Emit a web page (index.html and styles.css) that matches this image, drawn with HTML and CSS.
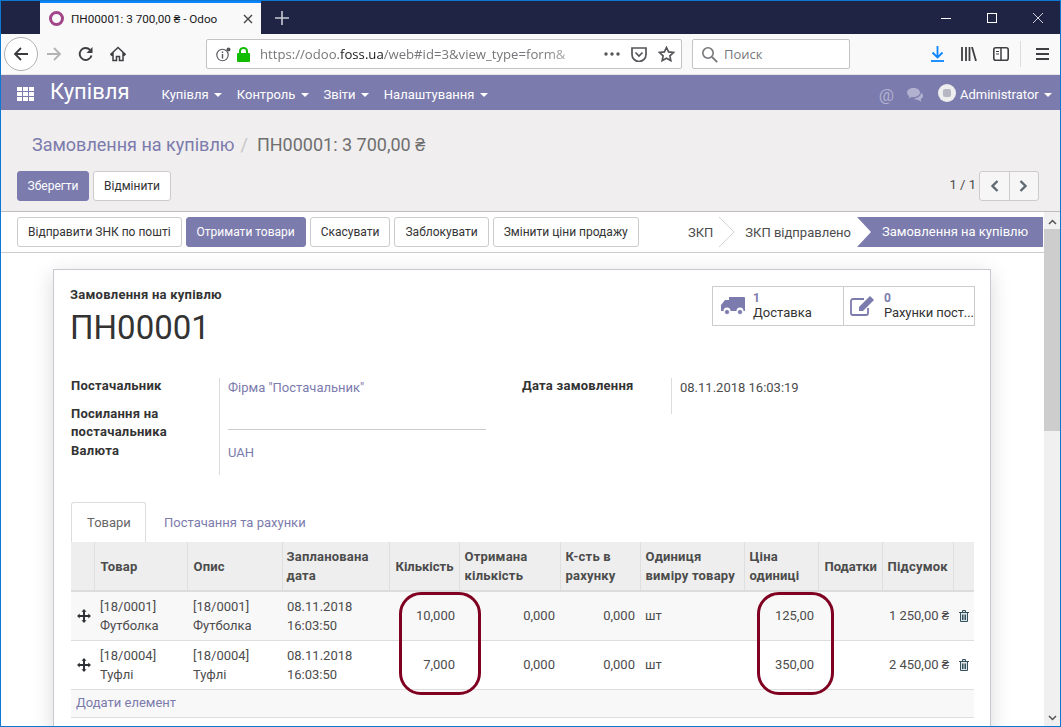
FILE: index.html
```html
<!DOCTYPE html>
<html lang="uk">
<head>
    <meta charset="UTF-8">
    <title>ПН00001: 3 700,00 ₴ - Odoo</title>
    <link rel="stylesheet" href="styles.css">
</head>
<body>
<div class="window">
    <!-- browser tabs -->
    <div class="tabbar">
        <div class="tab">
            <span class="favicon"></span>
            <span class="tab-title">ПН00001: 3 700,00 ₴ - Odoo</span>
            <svg class="tab-close" width="10" height="10" viewBox="0 0 10 10"><path d="M1 1l8 8M9 1l-8 8" stroke="#444" stroke-width="1.4"/></svg>
        </div>
        <svg class="tab-new" width="14" height="14" viewBox="0 0 14 14"><path d="M7 0v14M0 7h14" stroke="#c9cad3" stroke-width="1.6"/></svg>
        <div class="win-controls">
            <svg width="10" height="10" viewBox="0 0 10 10"><path d="M0 5.500h10" stroke="#fff"/></svg>
            <svg width="10" height="10" viewBox="0 0 10 10"><rect x=".5" y=".5" width="9" height="9" fill="none" stroke="#fff"/></svg>
            <svg width="10" height="10" viewBox="0 0 10 10"><path d="M0 0l10 10M10 0L0 10" stroke="#fff" stroke-width=".8"/></svg>
        </div>
    </div>

    <!-- browser toolbar -->
    <div class="toolbar">
        <span class="back-btn">
            <svg width="16" height="16" viewBox="0 0 16 16"><path d="M15 8H2M8 2L2 8l6 6" fill="none" stroke="#3b3b3f" stroke-width="1.8"/></svg>
        </span>
        <svg class="tool-icon fwd" width="16" height="16" viewBox="0 0 16 16"><path d="M1 8h13M8 2l6 6-6 6" fill="none" stroke="#b3b3b5" stroke-width="1.8"/></svg>
        <svg class="tool-icon" width="16" height="16" viewBox="0 0 16 16"><path d="M13.500 9.500A6 6 0 1 1 12 3.800" fill="none" stroke="#3f3f43" stroke-width="1.9"/><path d="M14.500 1v6h-6z" fill="#3f3f43"/></svg>
        <svg class="tool-icon" width="16" height="16" viewBox="0 0 16 16"><path d="M8 1.500L.8 8.200l1 1L3 8.200V14.500h3.500v-4h3v4H13V8.200l1.200 1 1-1z" fill="none" stroke="#3f3f43" stroke-width="1.5"/></svg>
        <div class="urlbar">
            <svg width="15" height="15" viewBox="0 0 15 15"><circle cx="6.500" cy="8" r="5.700" fill="none" stroke="#55555a" stroke-width="1.1"/><path d="M6.500 7v4.500M6.500 4.500v1.400" stroke="#55555a" stroke-width="1.4"/><circle cx="12.500" cy="2.500" r="2" fill="#55555a"/></svg>
            <svg class="lock" width="13" height="15" viewBox="0 0 13 15"><rect x="0" y="6" width="13" height="9" rx="1" fill="#12bc00"/><path d="M3 7V4a3.500 3 0 0 1 7 0v3" fill="none" stroke="#12bc00" stroke-width="2"/></svg>
            <span class="url"><span class="url-dim">https://odoo.</span>foss.ua<span class="url-dim">/web#id=3&amp;view_type=form&amp;</span></span>
            <svg class="url-dots" width="16" height="4" viewBox="0 0 16 4"><circle cx="2" cy="2" r="1.700" fill="#55555a"/><circle cx="8" cy="2" r="1.700" fill="#55555a"/><circle cx="14" cy="2" r="1.700" fill="#55555a"/></svg>
            <svg class="pocket" width="16" height="15" viewBox="0 0 16 15"><path d="M1 1h14v6.500a7 7 0 0 1-14 0z" fill="none" stroke="#55555a" stroke-width="1.7"/><path d="M4.500 5.500L8 9l3.500-3.500" fill="none" stroke="#55555a" stroke-width="1.7"/></svg>
            <svg width="17" height="16" viewBox="0 0 17 16"><path d="M8.500 1.500l2.100 4.400 4.800.6-3.500 3.300.9 4.800-4.300-2.400-4.300 2.400.9-4.800L1.600 6.500l4.800-.6z" fill="none" stroke="#55555a" stroke-width="1.7"/></svg>
        </div>
        <div class="searchbar">
            <svg width="17" height="17" viewBox="0 0 17 17"><circle cx="7" cy="7" r="5.200" fill="none" stroke="#77777b" stroke-width="1.6"/><path d="M11 11l5.200 5.200" stroke="#77777b" stroke-width="1.8"/></svg>
            <span>Поиск</span>
        </div>
        <div class="toolbar-right">
            <svg class="download" width="13" height="16" viewBox="0 0 13 16"><path d="M6.500 0v11M1.500 6.500l5 5 5-5" fill="none" stroke="#0a84ff" stroke-width="1.8"/><path d="M0 15h13" stroke="#0a84ff" stroke-width="1.8"/></svg>
            <svg width="16" height="14" viewBox="0 0 16 14"><path d="M1 0v14M5 0v14M8.500 0v14M11 0l4 14" fill="none" stroke="#3f3f43" stroke-width="1.8"/></svg>
            <svg width="16" height="14" viewBox="0 0 16 14"><rect x=".8" y=".8" width="14.400" height="12.400" rx="2" fill="#fff" stroke="#3f3f43" stroke-width="1.6"/><path d="M8 1v12" stroke="#3f3f43" stroke-width="1.5"/><path d="M3 4.500h3M3 7h3" stroke="#3f3f43"/></svg>
            <span class="toolbar-sep"></span>
            <svg width="13" height="12" viewBox="0 0 13 12"><path d="M0 1h13M0 6h13M0 11h13" stroke="#3f3f43" stroke-width="1.8"/></svg>
        </div>
    </div>

    <!-- odoo menu -->
    <nav class="navbar">
        <svg class="apps" width="17" height="14" viewBox="0 0 17 14"><path fill="#fff" d="M0 0h5v4H0zM6 0h5v4H6zM12 0h5v4h-5zM0 5h5v4H0zM6 5h5v4H6zM12 5h5v4h-5zM0 10h5v4H0zM6 10h5v4H6zM12 10h5v4h-5z"/></svg>
        <span class="brand">Купівля</span>
        <div class="menu">
            <a>Купівля <i class="caret"></i></a>
            <a>Контроль <i class="caret"></i></a>
            <a>Звіти <i class="caret"></i></a>
            <a>Налаштування <i class="caret"></i></a>
        </div>
        <div class="nav-right">
            <span class="at">@</span>
            <svg class="chat" width="17" height="14" viewBox="0 0 17 14"><path fill="#b2b1d0" d="M6.500 0C3 0 0 2 0 4.600c0 1.500 1 2.800 2.400 3.600L1.600 10.500l3-1.600c.6.100 1.300.200 1.900.200 3.600 0 6.500-2 6.500-4.500S10.100 0 6.500 0z"/><path fill="#b2b1d0" d="M14 4.500c.2 3-2.600 5.600-7 5.900 1 1 2.300 1.400 3.700 1.400l3.700 2-.7-2.700c1.400-.7 2.300-1.800 2.300-3.100 0-1.500-.8-2.700-2-3.500z"/></svg>
            <span class="avatar"><span></span></span>
            <span class="user">Administrator <i class="caret"></i></span>
        </div>
    </nav>

    <!-- control panel -->
    <div class="control-panel">
        <div class="breadcrumb"><a>Замовлення на купівлю</a><span class="slash">/</span><span>ПН00001: 3 700,00 ₴</span></div>
        <div class="cp-row">
            <div class="btn-row">
                <button class="btn primary save">Зберегти</button>
                <button class="btn">Відмінити</button>
            </div>
            <div class="pager">
                <span class="pager-text">1 / 1</span>
                <div class="pager-btns">
                    <span><svg width="9" height="12" viewBox="0 0 9 12"><path d="M7.500 1L2.500 6l5 5" fill="none" stroke="#5f6a72" stroke-width="2.400"/></svg></span>
                    <span><svg width="9" height="12" viewBox="0 0 9 12"><path d="M1.500 1l5 5-5 5" fill="none" stroke="#5f6a72" stroke-width="2.400"/></svg></span>
                </div>
            </div>
        </div>
    </div>

    <div class="form-area">
        <div class="form-main">
            <div class="statusbar">
                <div class="btn-row">
                    <button class="btn">Відправити ЗНК по пошті</button>
                    <button class="btn primary">Отримати товари</button>
                    <button class="btn">Скасувати</button>
                    <button class="btn">Заблокувати</button>
                    <button class="btn">Змінити ціни продажу</button>
                </div>
                <div class="stages">
                    <span class="stage">ЗКП</span>
                    <svg class="stage-arrow" width="16" height="30" viewBox="0 0 16 30"><path d="M0 0l15 15L0 30" fill="none" stroke="#d4d4d8"/></svg>
                    <span class="stage">ЗКП відправлено</span>
                    <span class="stage current">Замовлення на купівлю</span>
                </div>
            </div>

            <div class="sheet-bg">
                <div class="sheet">
                    <div class="sheet-top">
                        <div class="doc-title">
                            <div class="doc-label">Замовлення на купівлю</div>
                            <h1>ПН00001</h1>
                        </div>
                        <div class="stat-btns">
                            <div class="stat">
                                <svg width="24" height="20" viewBox="0 0 24 20"><path fill="#7c7bad" d="M8 1h15a1 1 0 0 1 1 1v13h-1.500a3.500 3.500 0 0 0-7 0H9.500a3.500 3.500 0 0 0-7 0H0V9l4-5h4z"/><circle cx="6" cy="16" r="2.500" fill="#7c7bad" stroke="#fff" stroke-width=".8"/><circle cx="19" cy="16" r="2.500" fill="#7c7bad" stroke="#fff" stroke-width=".8"/></svg>
                                <div class="stat-text"><b>1</b><span>Доставка</span></div>
                            </div>
                            <div class="stat">
                                <svg width="24" height="20" viewBox="0 0 24 20"><path d="M14 3H3a2 2 0 0 0-2 2v12a2 2 0 0 0 2 2h13a2 2 0 0 0 2-2v-5" fill="none" stroke="#7c7bad" stroke-width="1.800"/><path fill="#7c7bad" d="M20 0l4 4L13 15H9v-4z"/></svg>
                                <div class="stat-text"><b>0</b><span class="clip">Рахунки пост...</span></div>
                            </div>
                        </div>
                    </div>

                    <div class="groups">
                        <div class="group-left">
                            <label>Постачальник</label>
                            <a class="val">Фірма "Постачальник"</a>
                            <label>Посилання на постачальника</label>
                            <div class="val"><div class="input-line"></div></div>
                            <label>Валюта</label>
                            <a class="val last">UAH</a>
                        </div>
                        <div class="group-right">
                            <label>Дата замовлення</label>
                            <div class="val">08.11.2018 16:03:19</div>
                        </div>
                    </div>

                    <div class="tabs">
                        <span class="tab-item active">Товари</span>
                        <span class="tab-item">Постачання та рахунки</span>
                    </div>

                    <div class="table-wrap">
                        <table class="lines">
                            <colgroup>
                                <col class="c-h"><col class="c-prod"><col class="c-desc"><col class="c-date"><col class="c-qty"><col class="c-rec"><col class="c-inv"><col class="c-uom"><col class="c-price"><col class="c-tax"><col class="c-sum"><col class="c-del">
                            </colgroup>
                            <thead>
                                <tr>
                                    <th></th><th>Товар</th><th>Опис</th><th>Запланована дата</th><th class="tight">Кількість</th><th>Отримана кількість</th><th>К-сть в рахунку</th><th>Одиниця виміру товару</th><th>Ціна одиниці</th><th class="tight">Податки</th><th>Підсумок</th><th></th>
                                </tr>
                            </thead>
                            <tbody>
                                <tr class="odd">
                                    <td class="handle"><svg width="14" height="14" viewBox="0 0 14 14"><path fill="#2f3338" d="M7 0l2.500 2.700H8V6h3.300V4.500L14 7l-2.700 2.500V8H8v3.300h1.500L7 14l-2.500-2.700H6V8H2.700v1.500L0 7l2.700-2.500V6H6V2.700H4.500z"/></svg></td>
                                    <td>[18/0001] Футболка</td><td>[18/0001] Футболка</td><td>08.11.2018 16:03:50</td>
                                    <td class="num">10,000</td><td class="num">0,000</td><td class="num">0,000</td><td>шт</td><td class="num">125,00</td><td></td><td class="num">1 250,00 ₴</td>
                                    <td class="trash"><svg width="10" height="12" viewBox="0 0 10 12"><path fill="#dfe6e8" stroke="#34505c" d="M1.500 3v8.500h7V3M0 2.500h10M3.500 2.500V.5h3v2M3.500 4.500v5.500M5 4.500v5.500M6.500 4.500v5.500"/></svg></td>
                                </tr>
                                <tr>
                                    <td class="handle"><svg width="14" height="14" viewBox="0 0 14 14"><path fill="#2f3338" d="M7 0l2.500 2.700H8V6h3.300V4.500L14 7l-2.700 2.500V8H8v3.300h1.500L7 14l-2.500-2.700H6V8H2.700v1.500L0 7l2.700-2.500V6H6V2.700H4.500z"/></svg></td>
                                    <td>[18/0004] Туфлі</td><td>[18/0004] Туфлі</td><td>08.11.2018 16:03:50</td>
                                    <td class="num">7,000</td><td class="num">0,000</td><td class="num">0,000</td><td>шт</td><td class="num">350,00</td><td></td><td class="num">2 450,00 ₴</td>
                                    <td class="trash"><svg width="10" height="12" viewBox="0 0 10 12"><path fill="#dfe6e8" stroke="#34505c" d="M1.500 3v8.500h7V3M0 2.500h10M3.500 2.500V.5h3v2M3.500 4.500v5.500M5 4.500v5.500M6.500 4.500v5.500"/></svg></td>
                                </tr>
                                <tr class="add-row">
                                    <td colspan="12"><a>Додати елемент</a></td>
                                </tr>
                            </tbody>
                        </table>
                        <div class="oval oval-qty"></div>
                        <div class="oval oval-price"></div>
                    </div>
                </div>
            </div>
        </div>

        <div class="scrollbar">
            <svg width="9" height="6" viewBox="0 0 9 6"><path d="M1 5l3.500-3.500L8 5" fill="none" stroke="#555" stroke-width="1.500"/></svg>
            <div class="thumb"></div>
            <svg class="scroll-down" width="9" height="6" viewBox="0 0 9 6"><path d="M1 1l3.500 3.500L8 1" fill="none" stroke="#555" stroke-width="1.500"/></svg>
        </div>
    </div>
</div>
</body>
</html>
```

FILE: styles.css
```css
* {
    box-sizing: border-box;
}

html, body {
    margin: 0;
    padding: 0;
    height: 100%;
    overflow: hidden;
}

body {
    font-family: Roboto, "Liberation Sans", sans-serif;
    font-size: 13px;
    color: #4c4c4c;
}

.window {
    width: 1061px;
    height: 727px;
    border: 1px solid #0c78d2;
    display: flex;
    flex-direction: column;
    overflow: hidden;
    background: #fff;
}

/* browser chrome */
.tabbar {
    height: 33px;
    flex: none;
    background: #1f2445;
    display: flex;
    align-items: center;
}

.tab {
    width: 221px;
    height: 33px;
    margin-left: 39px;
    background: #f9f9fa;
    border-top: 2px solid #0a84ff;
    display: flex;
    align-items: center;
    padding-left: 9px;
    font-size: 11.7px;
    color: #1a1a1a;
}

.favicon {
    width: 15px;
    height: 15px;
    border: 3px solid #a24689;
    border-radius: 50%;
    margin-right: 7px;
}

.tab-title {
    flex: 1;
    white-space: nowrap;
}

.tab-close {
    margin-right: 8px;
}

.tab-new {
    margin-left: 14px;
}

.win-controls {
    margin-left: auto;
    display: flex;
    gap: 36px;
    padding-right: 17px;
}

.toolbar {
    height: 41px;
    flex: none;
    background: #f9f9fa;
    border-bottom: 1px solid #e6e6e8;
    display: flex;
    align-items: center;
}

.back-btn {
    width: 34px;
    height: 34px;
    margin-left: 3px;
    border: 1px solid #b1b1b3;
    border-radius: 50%;
    background: #fff;
    display: flex;
    align-items: center;
    justify-content: center;
}

.tool-icon {
    margin-left: 16px;
}

.tool-icon.fwd {
    margin-left: 8px;
}

.urlbar {
    width: 476px;
    height: 30px;
    margin-left: 80px;
    background: #fff;
    border: 1px solid #c4c4c6;
    border-radius: 2px;
    display: flex;
    align-items: center;
    padding: 0 6px 0 9px;
    gap: 7px;
}

.lock {
    margin-left: -1px;
}

.url {
    flex: 1;
    margin-left: 3px;
    font-family: "Open Sans", "Noto Sans", sans-serif;
    font-size: 13.15px;
    color: #1a1a1a;
    white-space: nowrap;
    overflow: hidden;
    -webkit-mask-image: linear-gradient(90deg, #000 84%, transparent 100%);
    mask-image: linear-gradient(90deg, #000 84%, transparent 100%);
}

.url-dim {
    color: #77777b;
}

.url-dots {
    margin-right: 4px;
}

.pocket {
    margin-right: 4px;
}

.searchbar {
    width: 158px;
    height: 30px;
    margin-left: 10px;
    background: #fff;
    border: 1px solid #c4c4c6;
    border-radius: 2px;
    display: flex;
    align-items: center;
    gap: 6px;
    padding-left: 8px;
    font-family: "Open Sans", "Noto Sans", sans-serif;
    color: #77777b;
}

.toolbar-right {
    margin-left: auto;
    display: flex;
    align-items: center;
    gap: 16px;
    padding-right: 11px;
}

.download {
    margin-right: 1px;
}

.toolbar-sep {
    width: 1px;
    height: 26px;
    background: #dcdcde;
    margin: 0 -1px 0 -5px;
}

/* odoo menu */
.navbar {
    height: 35px;
    flex: none;
    background: #7c7bad;
    color: #fff;
    display: flex;
    align-items: center;
    padding: 4px 0 0 16px;
}

.apps {
    position: relative;
    top: -1px;
}

.brand {
    font-size: 22px;
    margin-left: 16px;
    position: relative;
    top: -3px;
}

.menu {
    margin-left: 32px;
    display: flex;
    gap: 15px;
}

.menu a {
    white-space: nowrap;
}

.caret {
    display: inline-block;
    width: 0;
    height: 0;
    margin-left: 2px;
    vertical-align: 2px;
    border-top: 4px solid #fff;
    border-left: 4px solid transparent;
    border-right: 4px solid transparent;
}

.nav-right {
    margin-left: auto;
    display: flex;
    align-items: center;
    padding-right: 8px;
}

.at {
    font-size: 17px;
    color: #b2b1d0;
    margin-right: 13px;
}

.chat {
    margin-right: 14px;
}

.avatar {
    width: 18px;
    height: 18px;
    border-radius: 50%;
    background: #eeeeee;
    display: flex;
    align-items: center;
    justify-content: center;
    margin-right: 4px;
    position: relative;
    top: -2px;
}

.avatar span {
    width: 8px;
    height: 8px;
    background: #b7b7c4;
    border-radius: 2px;
}

/* control panel */
.control-panel {
    height: 102px;
    flex: none;
    background: #f0eeee;
    border-bottom: 1px solid #bdbdbd;
    padding: 24px 21px 0 16px;
}

.breadcrumb {
    font-size: 18px;
    line-height: 21px;
    padding-left: 15px;
    color: #6f6f6f;
}

.breadcrumb a {
    color: #7c7bad;
}

.slash {
    color: #c5c5c5;
    margin: 0 9px 0 6px;
}

.cp-row {
    margin-top: 16px;
    display: flex;
    justify-content: space-between;
}

.btn-row {
    display: flex;
    gap: 4px;
}

.btn {
    height: 30px;
    padding: 0 10px;
    font-family: inherit;
    font-size: 12px;
    color: #333;
    background: #fff;
    border: 1px solid #ccc;
    border-radius: 3px;
    white-space: nowrap;
}

.btn.primary {
    background: #7c7bad;
    border-color: #7c7bad;
    color: #fff;
}

.btn.save {
    width: 72px;
    padding: 0;
}

.pager {
    display: flex;
    align-items: center;
    gap: 3px;
    color: #4c4c4c;
}

.pager-text {
    margin-bottom: 4px;
}

.pager-btns {
    display: flex;
    width: 60px;
    height: 30px;
    border: 1px solid #ccc;
    border-radius: 3px;
    background: #f6f6f6;
}

.pager-btns span {
    flex: 1;
    display: flex;
    align-items: center;
    justify-content: center;
}

.pager-btns span + span {
    border-left: 1px solid #ccc;
}

/* form */
.form-area {
    flex: 1;
    display: flex;
    min-height: 0;
}

.form-main {
    flex: 1;
    min-width: 0;
    display: flex;
    flex-direction: column;
}

.statusbar {
    height: 41px;
    flex: none;
    border-bottom: 1px solid #ccc;
    display: flex;
    justify-content: space-between;
    align-items: flex-start;
    padding: 5px 1px 0 16px;
}

.stages {
    display: flex;
    align-items: center;
    height: 30px;
    color: #4c4c4c;
}

.stage {
    white-space: nowrap;
}

.stage-arrow {
    margin: 0 10px 0 6px;
}

.stage.current {
    width: 186px;
    height: 30px;
    margin-left: 6px;
    padding-left: 25px;
    line-height: 30px;
    color: #fff;
    background: #7c7bad;
    clip-path: polygon(0 0, 100% 0, 100% 100%, 0 100%, 14px 50%);
}

.sheet-bg {
    flex: 1;
    overflow: hidden;
    padding: 16px 52px 0;
    min-height: 0;
}

.sheet {
    width: 938px;
    height: 700px;
    background: #fff;
    border: 1px solid #c8c8d3;
    box-shadow: 0 5px 20px rgba(0, 0, 0, 0.15);
    padding: 16px 15px 0 17px;
}

.sheet-top {
    display: flex;
    justify-content: space-between;
    align-items: flex-start;
}

.doc-title {
    margin-left: -1px;
}

.doc-label {
    margin-top: 1px;
    font-weight: 700;
    letter-spacing: 0.25px;
    color: #333;
    line-height: 15px;
}

h1 {
    margin: 7px 0 0;
    font-size: 33px;
    font-weight: 400;
    line-height: 38px;
    color: #333;
}

.stat-btns {
    display: flex;
    border: 1px solid #ccc;
    height: 40px;
    width: 263px;
}

.stat {
    width: 130px;
    display: flex;
    align-items: center;
    gap: 8px;
    padding-left: 8px;
    color: #333;
    line-height: 15px;
    white-space: nowrap;
}

.stat + .stat {
    width: 131px;
    border-left: 1px solid #ccc;
    padding-left: 6px;
    gap: 10px;
}

.stat-text {
    padding-bottom: 2px;
}

.stat b {
    display: block;
    color: #7c7bad;
    font-size: 12px;
    line-height: 14px;
}

.stat span {
    display: block;
}

.clip {
    letter-spacing: -0.1px;
}

.groups {
    display: flex;
    margin-top: 31px;
}

.group-left {
    width: 415px;
    display: grid;
    grid-template-columns: 148px 1fr;
    margin-right: 36px;
    grid-auto-rows: min-content;
    height: 97px;
}

.group-right {
    flex: 1;
    display: grid;
    grid-template-columns: 149px 1fr;
    align-self: flex-start;
}

label {
    font-weight: 700;
    letter-spacing: 0.25px;
    color: #333;
    line-height: 18px;
    margin-top: -1px;
}

.group-left label:nth-child(1) {
    height: 29px;
}

.group-left label:nth-child(3) {
    padding-right: 20px;
    height: 38px;
}

.val {
    display: block;
    border-left: 1px solid #dcdcdc;
    padding-left: 8px;
    padding-top: 2px;
    color: #4c4c4c;
}

a.val {
    color: #7c7bad;
}

.group-right .val {
    height: 36px;
}

.val.last {
    height: 32px;
}

.group-left .val:nth-child(4) {
    padding-top: 0;
}

.input-line {
    height: 24px;
    border-bottom: 1px solid #ccc;
}

.tabs {
    margin-top: 27px;
    display: flex;
    height: 40px;
    align-items: stretch;
}

.tab-item {
    padding: 13px 15px 0 18px;
    color: #7c7bad;
    line-height: 15px;
}

.tab-item.active {
    width: 75px;
    padding-top: 12px;
    padding-left: 15px;
    color: #666;
    border: 1px solid #ddd;
    border-bottom: none;
    border-radius: 3px 3px 0 0;
    background: #fff;
}

.table-wrap {
    position: relative;
}

.lines {
    width: 903px;
    table-layout: fixed;
    border-collapse: collapse;
    line-height: 19px;
    color: #4c4c4c;
}

.c-h { width: 23px; }
.c-prod { width: 93px; }
.c-desc { width: 95px; }
.c-date { width: 107px; }
.c-qty { width: 70px; }
.c-rec { width: 101px; }
.c-inv { width: 80px; }
.c-uom { width: 104px; }
.c-price { width: 74px; }
.c-tax { width: 64px; }
.c-sum { width: 71px; }
.c-del { width: 21px; }

.lines th {
    height: 49px;
    padding: 0 5px;
    text-align: left;
    font-weight: 700;
    letter-spacing: 0.2px;
    color: #4c4c4c;
    background: #eeeeee;
    border-left: 1px solid #dfdfdf;
    border-bottom: 2px solid #dcdcdc;
}

.lines th:first-child {
    border-left: none;
}

.lines th:nth-child(2), .lines th:nth-child(3),
.lines td:nth-child(2), .lines td:nth-child(3) {
    padding-left: 6px;
}

.lines th:nth-child(4) {
    padding-left: 4px;
}

.lines th.tight {
    padding: 0 0 0 6px;
    letter-spacing: 0;
    white-space: nowrap;
}

.lines td {
    height: 49px;
    padding: 0 5px;
    border-bottom: 1px solid #dedede;
}

.lines tr.odd td {
    background: #f8f8f8;
}

.lines td.num {
    text-align: right;
    white-space: nowrap;
}

.lines td:nth-child(5), .lines td:nth-child(9), .lines td:nth-child(11) {
    padding-right: 4px;
}

.lines td.handle {
    padding: 0 0 0 6px;
}

.handle svg, .trash svg {
    display: block;
}

.lines td.trash {
    padding: 0 0 0 6px;
}

.lines tr.add-row td {
    height: 28px;
    background: #f8f8f8;
    color: #7c7bad;
    padding: 0 0 2px 5px;
}

/* red hand-drawn marks over the table */
.oval {
    position: absolute;
    top: 50px;
    height: 103px;
    border: 3px solid #7f0020;
    border-radius: 22px;
}

.oval-qty {
    left: 328px;
    width: 82px;
}

.oval-price {
    left: 686px;
    width: 77px;
}

.scrollbar {
    width: 16px;
    flex: none;
    background: #f0f0f0;
    display: flex;
    flex-direction: column;
    align-items: center;
    padding: 7px 0 5px;
}

.thumb {
    width: 16px;
    height: 202px;
    margin-top: 4px;
    background: #cdcdcd;
}

.scroll-down {
    margin-top: auto;
}
```
